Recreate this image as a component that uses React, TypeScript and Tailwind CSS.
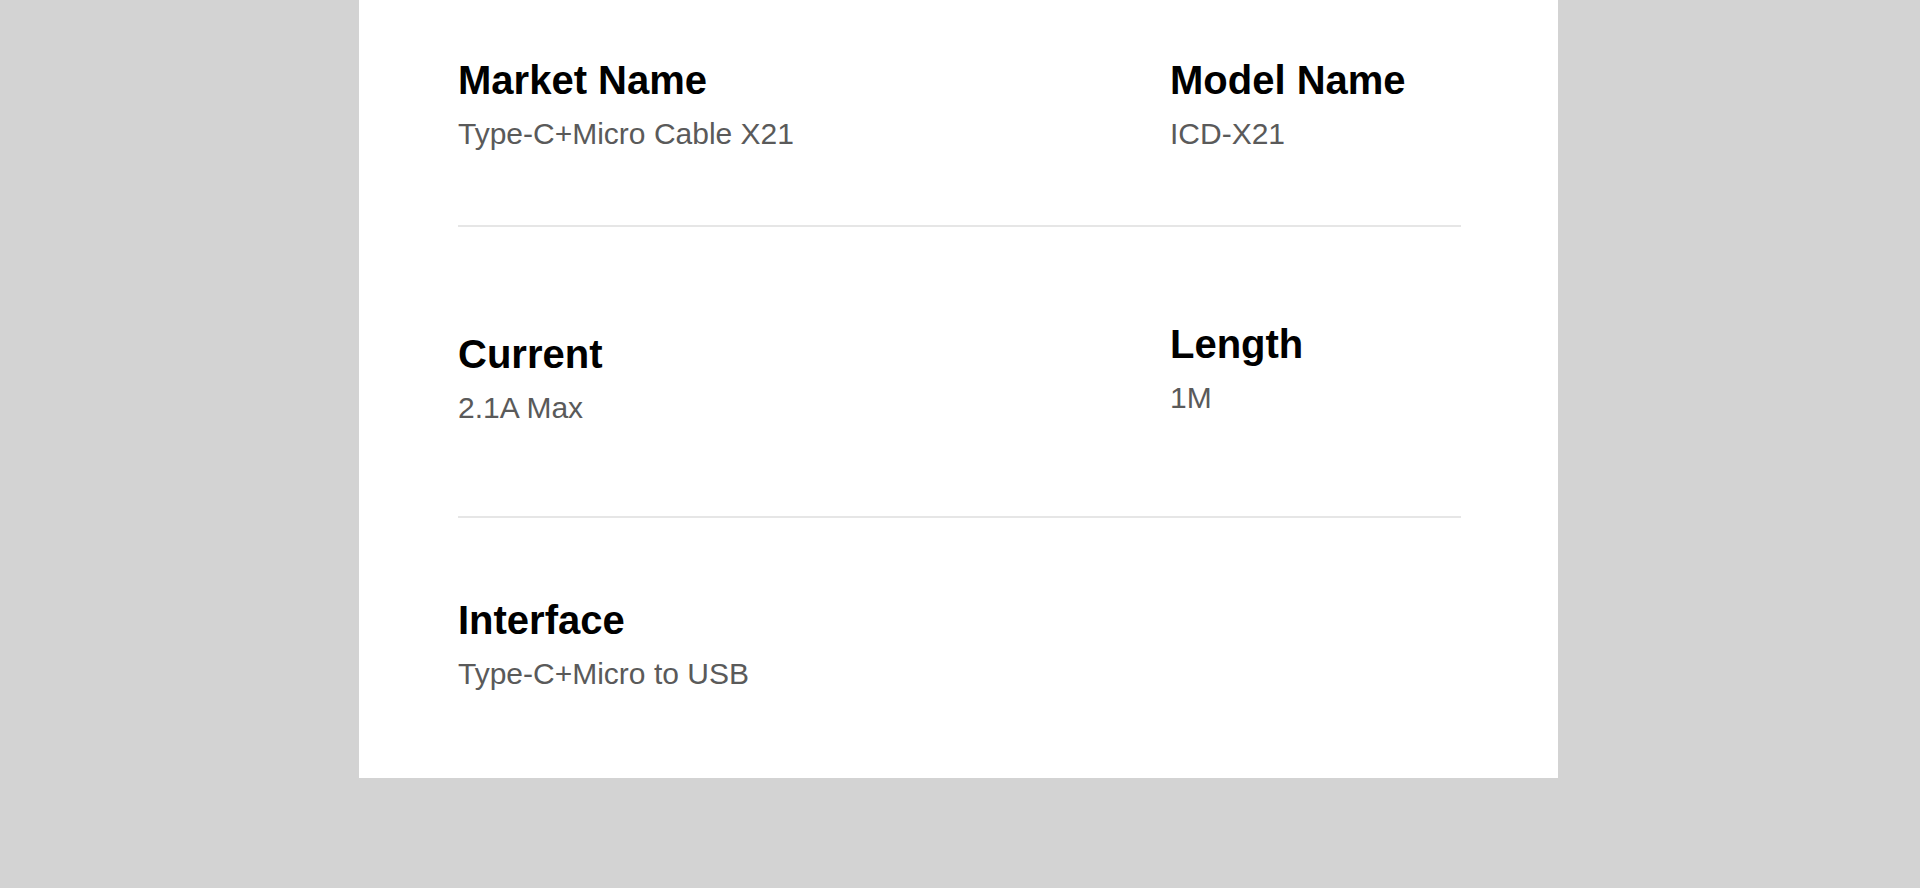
const specs = [
  {
    left: { label: 'Market Name', value: 'Type-C+Micro Cable X21' },
    right: { label: 'Model Name', value: 'ICD-X21' },
    rowClass: 'h-[227px] border-b-2 border-[#e6e6e6]',
    leftPad: 'pt-[57px]',
    rightPad: 'pt-[57px]',
  },
  {
    left: { label: 'Current', value: '2.1A Max' },
    right: { label: 'Length', value: '1M' },
    rowClass: 'h-[291px] border-b-2 border-[#e6e6e6]',
    leftPad: 'pt-[104px]',
    rightPad: 'pt-[94px]',
  },
  {
    left: { label: 'Interface', value: 'Type-C+Micro to USB' },
    right: null,
    rowClass: 'h-[260px]',
    leftPad: 'pt-[79px]',
    rightPad: '',
  },
];

function SpecCell({ label, value }: { label: string; value: string }) {
  return (
    <div>
      <h3 className="text-[40px] leading-[46px] font-bold text-black">{label}</h3>
      <p className="mt-[13px] text-[30px] leading-[36px] text-[#5a5a5a]">{value}</p>
    </div>
  );
}

export default function App() {
  return (
    <div
      className="min-h-screen bg-[#d3d3d3]"
      style={{ fontFamily: '"Liberation Sans", Arial, sans-serif' }}
    >
      <div className="ml-[359px] w-[1199px] bg-white pl-[99px] pr-[97px]">
        {specs.map((row, i) => (
          <div key={i} className={`grid grid-cols-[712px_1fr] ${row.rowClass}`}>
            <div className={row.leftPad}>
              <SpecCell {...row.left} />
            </div>
            <div className={row.rightPad}>{row.right && <SpecCell {...row.right} />}</div>
          </div>
        ))}
      </div>
    </div>
  );
}
